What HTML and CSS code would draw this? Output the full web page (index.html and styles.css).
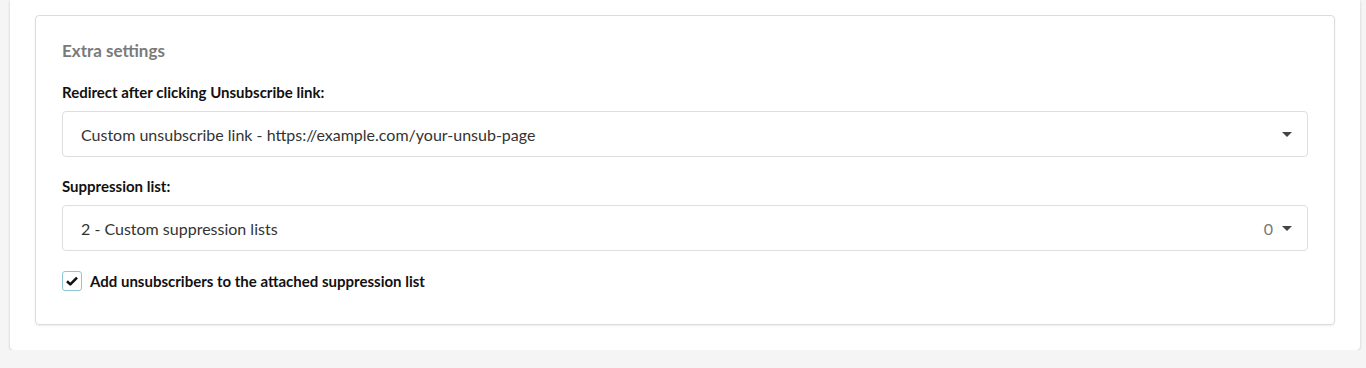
FILE: index.html
```html
<!DOCTYPE html>
<html lang="en">
<head>
    <meta charset="UTF-8">
    <title>Extra settings</title>
    <link rel="stylesheet" href="styles.css">
</head>
<body>

<div class="page-card">

    <!-- Extra settings panel -->
    <div class="panel">
        <h3 class="panel-title">Extra settings</h3>

        <div class="field">
            <label class="field-label">Redirect after clicking Unsubscribe link:</label>
            <div class="select">
                <span class="select-text">Custom unsubscribe link - https://example.com/your-unsub-page</span>
                <span class="caret"></span>
            </div>
        </div>

        <div class="field">
            <label class="field-label">Suppression list:</label>
            <div class="select">
                <span class="select-text">2 - Custom suppression lists</span>
                <span class="count">0</span>
                <span class="caret"></span>
            </div>
        </div>

        <label class="check">
            <span class="check-box">
                <svg width="12" height="10" viewBox="0 0 12 10"><path d="M1 5.2 L4.3 8.4 L11 1.6" fill="none" stroke="#111" stroke-width="2.6" stroke-linejoin="round"/></svg>
            </span>
            <span class="check-label">Add unsubscribers to the attached suppression list</span>
        </label>
    </div>

</div>

</body>
</html>
```

FILE: styles.css
```css
/* General */
* {
    margin: 0;
    padding: 0;
    box-sizing: border-box;
}

body {
    background: #f5f5f5;
    font-family: Lato, "Noto Sans", sans-serif;
    color: #222;
    padding: 0 6px 0 10px;
}

/* Outer card */
.page-card {
    background: #fff;
    border-radius: 0 0 4px 4px;
    box-shadow: 0 1px 3px rgba(0, 0, 0, 0.18);
    padding: 15px 25px 25px;
    height: 350px;
}

/* Panel */
.panel {
    border: 1px solid #dcdcdc;
    border-radius: 4px;
    box-shadow: 0 1px 2px rgba(0, 0, 0, 0.08);
    padding: 24px 26px 30px;
    height: 310px;
}

.panel-title {
    font-size: 17px;
    font-weight: 700;
    color: #7a7a7a;
    line-height: 22px;
    margin-bottom: 21px;
}

.field {
    margin-bottom: 20px;
}

.field-label {
    display: block;
    font-size: 15px;
    font-weight: 700;
    color: #111;
    line-height: 18px;
    margin-bottom: 10px;
}

.select {
    display: flex;
    align-items: center;
    height: 46px;
    border: 1px solid #dedede;
    border-radius: 4px;
    padding: 0 15px 0 18px;
}

.select-text {
    flex: 1;
    font-size: 16px;
    color: #333;
}

.count {
    font-size: 16px;
    color: #777;
    margin-right: 9px;
}

.caret {
    width: 0;
    height: 0;
    border-left: 5px solid transparent;
    border-right: 5px solid transparent;
    border-top: 5px solid #444;
}

/* Checkbox */
.check {
    display: flex;
    align-items: center;
    gap: 8px;
    margin-top: 1px;
}

.check-box {
    width: 20px;
    height: 20px;
    border: 1px solid #8fc5d6;
    border-radius: 3px;
    display: flex;
    align-items: center;
    justify-content: center;
}

.check-label {
    font-size: 15px;
    font-weight: 700;
    color: #111;
}
```
